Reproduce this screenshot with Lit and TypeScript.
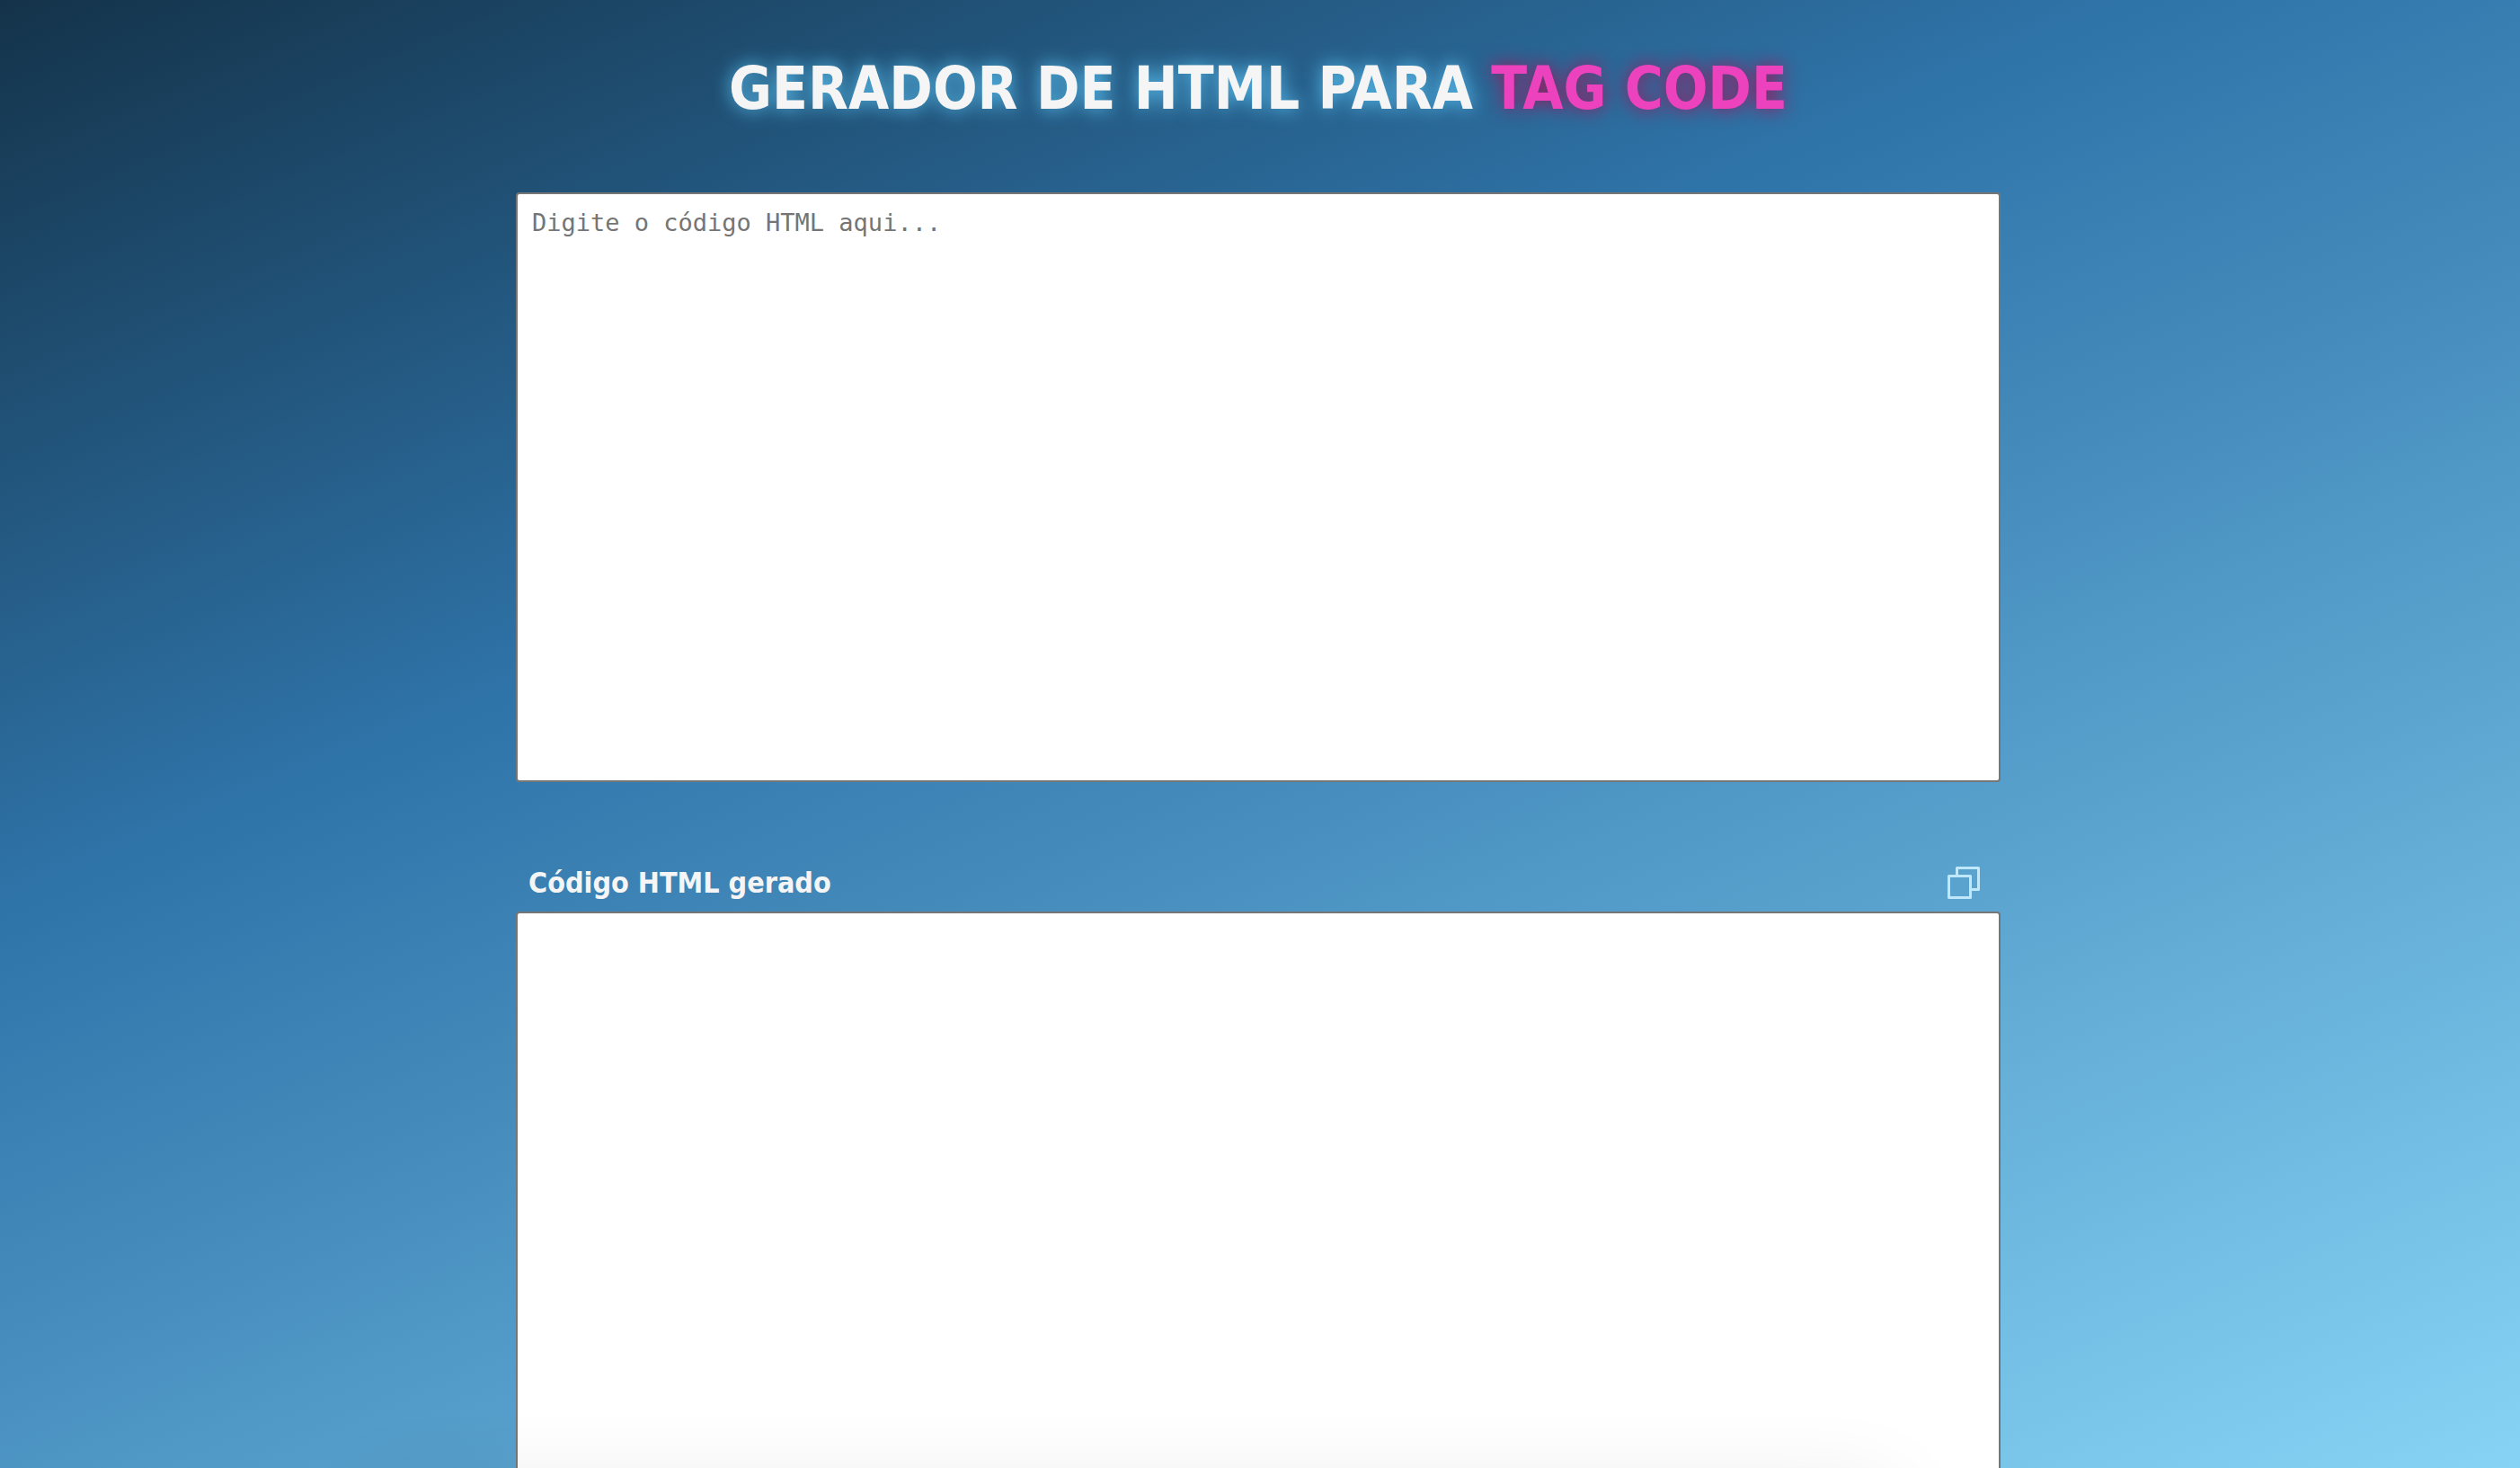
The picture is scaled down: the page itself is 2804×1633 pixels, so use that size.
import { LitElement, html, css } from "lit";
import { customElement, state, query } from "lit/decorators.js";

const ENTITIES: Record<string, string> = {
  "&": "&amp;",
  "<": "&lt;",
  ">": "&gt;",
};

@customElement("app-root")
export class AppRoot extends LitElement {
  static styles = css`
    :host {
      display: block;
      height: 100vh;
      overflow: hidden;
      font-family: Tahoma, "DejaVu Sans Condensed", "DejaVu Sans", sans-serif;
      color: whitesmoke;
      background: linear-gradient(157deg, #14334a 0%, #2f74a9 36%, #86d3f5 100%);
    }
    .page {
      display: flex;
      flex-direction: column;
      align-items: center;
      box-sizing: border-box;
      height: 100%;
      padding: 60px 4px 0 0;
    }
    .title {
      margin: 0 0 76px;
      font-size: 65px;
      line-height: 78px;
      font-weight: 700;
      text-align: center;
      text-transform: uppercase;
      text-shadow: 0 0 20px #5bc0f0;
    }
    .accent {
      color: #ec42bd;
      text-shadow: 0 0 20px #a1155c;
    }
    .editor {
      display: flex;
      flex-direction: column;
      flex: 1;
      width: 59%;
      min-height: 0;
    }
    .box {
      display: block;
      box-sizing: border-box;
      flex: none;
      width: 100%;
      height: 656px;
      margin: 0;
      padding: 16px;
      border: 2px solid #767676;
      border-radius: 4px;
      background: #fff;
      color: #000;
      font: 27px/31px "DejaVu Sans Mono", monospace;
      resize: none;
    }
    .box::placeholder {
      color: #757575;
    }
    .bar {
      display: flex;
      flex: none;
      align-items: center;
      justify-content: space-between;
      margin-top: 92px;
      padding: 0 23px 12px 14px;
    }
    .caption {
      font-size: 32px;
      line-height: 40px;
      font-weight: 700;
    }
    .copy {
      display: flex;
      padding: 0;
      border: 0;
      background: none;
      color: #bfe8fd;
      cursor: pointer;
    }
    .copy svg {
      width: 36px;
      height: 36px;
    }
    .shade {
      position: fixed;
      left: 15%;
      right: 25%;
      bottom: -76px;
      height: 40px;
      box-shadow: 0 0 100px rgba(0, 0, 0, 0.16);
      pointer-events: none;
    }
  `;

  @state() private code = "";
  @query("#result") private result!: HTMLTextAreaElement;

  private onInput(e: Event) {
    const text = (e.target as HTMLTextAreaElement).value;
    this.code = text.replace(/[&<>]/g, (c) => ENTITIES[c]);
  }

  private copy() {
    navigator.clipboard?.writeText(this.result.value);
  }

  render() {
    return html`
      <main class="page">
        <h1 class="title">
          Gerador de HTML para <span class="accent">tag code</span>
        </h1>
        <div class="editor">
          <textarea
            class="box"
            aria-label="Código HTML"
            placeholder="Digite o código HTML aqui..."
            @input=${this.onInput}
          ></textarea>
          <div class="bar">
            <label class="caption" for="result">Código HTML gerado</label>
            <button class="copy" type="button" aria-label="Copiar" @click=${this.copy}>
              <svg viewBox="0 0 36 36" fill="none" stroke="currentColor" stroke-width="3" stroke-linejoin="round" aria-hidden="true">
                <rect x="1.5" y="10.5" width="24" height="24" />
                <path d="M10.5 10.5V1.5h24v24h-9" />
              </svg>
            </button>
          </div>
          <textarea id="result" class="box" readonly .value=${this.code}></textarea>
        </div>
      </main>
      <div class="shade"></div>
    `;
  }
}
